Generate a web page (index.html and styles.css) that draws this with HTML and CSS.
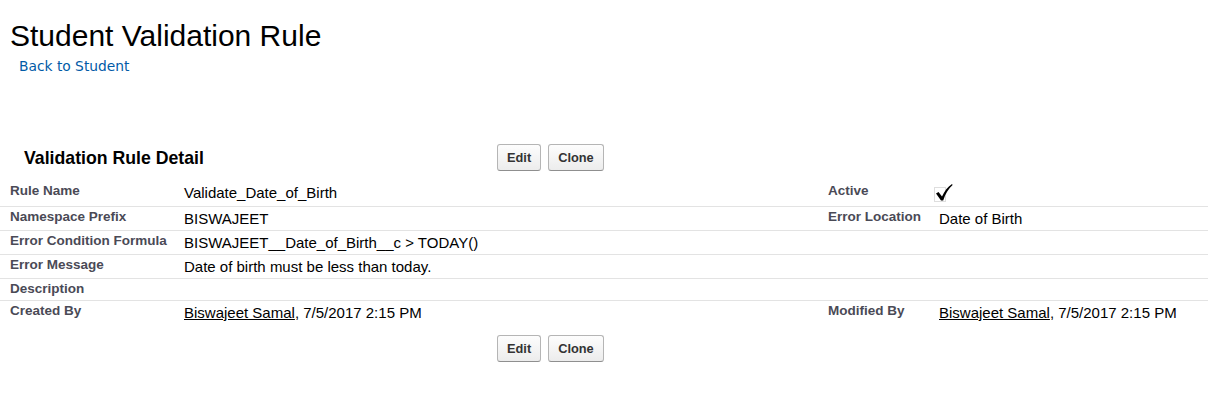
FILE: index.html
```html
<html>
    <head>
        <link rel="stylesheet" href="styles.css">
    </head>
    <body>
        <div class="page-header">
            <h1 class="page-title">Student Validation Rule</h1>
            <a class="back-link" href="#">Back to Student</a>
        </div>
        <div class="block">
            <div class="block-head">
                <h2 class="block-title">Validation Rule Detail</h2>
                <div class="buttons">
                    <button class="btn">Edit</button>
                    <button class="btn">Clone</button>
                </div>
            </div>
            <div class="detail-list">
                <div class="row">
                    <div class="label">Rule Name</div>
                    <div class="data">Validate_Date_of_Birth</div>
                    <div class="label">Active</div>
                    <div class="data data-check">
                        <svg class="checkbox" width="25" height="22" viewBox="0 0 25 22">
                            <rect x="5.5" y="6.5" width="11" height="14" fill="none" stroke="#bdbdbd" stroke-dasharray="1 1"/>
                            <path d="M7 12.5 L9.5 11 L13 15.5 C15.5 10 18.5 6 23 3 L23.6 4 C19.5 7.5 16.5 12.5 14.2 19.5 L12 19.5 Z" fill="#000"/>
                        </svg>
                    </div>
                </div>
                <div class="row">
                    <div class="label">Namespace Prefix</div>
                    <div class="data">BISWAJEET</div>
                    <div class="label">Error Location</div>
                    <div class="data">Date of Birth</div>
                </div>
                <div class="row">
                    <div class="label">Error Condition Formula</div>
                    <div class="data">BISWAJEET__Date_of_Birth__c &gt; TODAY()</div>
                    <div class="label"></div>
                    <div class="data"></div>
                </div>
                <div class="row">
                    <div class="label">Error Message</div>
                    <div class="data">Date of birth must be less than today.</div>
                    <div class="label"></div>
                    <div class="data"></div>
                </div>
                <div class="row">
                    <div class="label">Description</div>
                    <div class="data"></div>
                    <div class="label"></div>
                    <div class="data"></div>
                </div>
                <div class="row row-last">
                    <div class="label">Created By</div>
                    <div class="data"><a class="user-link" href="#">Biswajeet Samal</a>, 7/5/2017 2:15 PM</div>
                    <div class="label">Modified By</div>
                    <div class="data"><a class="user-link" href="#">Biswajeet Samal</a>, 7/5/2017 2:15 PM</div>
                </div>
            </div>
            <div class="block-foot">
                <div class="buttons">
                    <button class="btn">Edit</button>
                    <button class="btn">Clone</button>
                </div>
            </div>
        </div>
    </body>
</html>
```

FILE: styles.css
```css
body {
    margin: 0;
    background: white;
    font-family: "Liberation Sans", Arial, sans-serif;
    color: #000;
}
.page-header {
    padding: 18px 0 0 10px;
}
.page-title {
    margin: 0;
    font-size: 30px;
    line-height: 35px;
    font-weight: normal;
}
.back-link {
    display: block;
    margin: 5px 0 0 9px;
    font-family: "DejaVu Sans", Verdana, sans-serif;
    font-size: 13.8px;
    line-height: 16px;
    color: #015ba7;
    text-decoration: none;
}
.block {
    margin-top: 70px;
}
.block-head {
    display: flex;
    align-items: center;
}
.block-title {
    width: 473px;
    margin: 0 0 0 24px;
    font-size: 17.7px;
    line-height: 22px;
    font-weight: bold;
}
.buttons {
    display: flex;
    gap: 7px;
}
.btn {
    font-family: "Liberation Sans", Arial, sans-serif;
    font-size: 12.8px;
    font-weight: bold;
    line-height: 15px;
    color: #333;
    padding: 5px 9px;
    border: 1px solid #b5b5b5;
    border-bottom-color: #8f8f8f;
    border-radius: 3px;
    background: linear-gradient(#fdfdfd, #ececec);
}
.detail-list {
    margin-top: 10px;
}
.row {
    display: grid;
    grid-template-columns: 174px 644px 111px 1fr;
    border-bottom: 1px solid #e3e3e3;
}
.row-last {
    border-bottom: none;
}
.label {
    padding: 3px 0 4px 10px;
    font-size: 13.5px;
    line-height: 14px;
    font-weight: bold;
    color: #4a4a56;
    white-space: nowrap;
}
.data {
    padding: 4px 10px 3px;
    font-size: 15px;
    line-height: 16px;
    white-space: nowrap;
}
.data-check {
    padding: 0 0 3px 0;
}
.checkbox {
    display: block;
}
.user-link {
    color: #000;
    text-decoration: underline;
}
.block-foot {
    margin-top: 11px;
    padding-left: 497px;
}
```
